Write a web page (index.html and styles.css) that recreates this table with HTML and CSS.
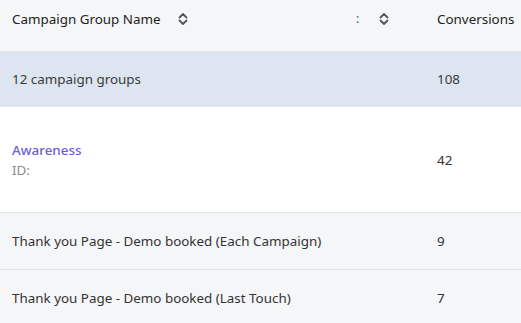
FILE: index.html
```html
<!DOCTYPE html>
<html>
<head>
<meta charset="utf-8">
<link rel="stylesheet" href="styles.css">
</head>
<body>
<div class="table">
  <div class="row head">
    <div class="c1"><span>Campaign Group Name</span>
      <svg class="sort" width="12" height="16" viewBox="0 0 12 16"><path d="M2.5 6.5 L6 3 L9.5 6.5 M2.5 9.5 L6 13 L9.5 9.5" fill="none" stroke="#555" stroke-width="1.8" stroke-linecap="round" stroke-linejoin="round"/></svg>
    </div>
    <div class="c2"><span class="colon">:</span>
      <svg class="sort" width="12" height="16" viewBox="0 0 12 16"><path d="M2.5 6.5 L6 3 L9.5 6.5 M2.5 9.5 L6 13 L9.5 9.5" fill="none" stroke="#555" stroke-width="1.8" stroke-linecap="round" stroke-linejoin="round"/></svg>
    </div>
    <div class="c3">Conversions</div>
  </div>
  <div class="row summary">
    <div class="c1">12 campaign groups</div>
    <div class="c2"></div>
    <div class="c3">108</div>
  </div>
  <div class="row tall">
    <div class="c1"><div class="link">Awareness</div><div class="id">ID:</div></div>
    <div class="c2"></div>
    <div class="c3">42</div>
  </div>
  <div class="row alt">
    <div class="c1">Thank you Page - Demo booked (Each Campaign)</div>
    <div class="c2"></div>
    <div class="c3">9</div>
  </div>
  <div class="row alt">
    <div class="c1">Thank you Page - Demo booked (Last Touch)</div>
    <div class="c2"></div>
    <div class="c3">7</div>
  </div>
</div>
</body>
</html>
```
FILE: styles.css
```css
html, body { margin: 0; padding: 0; background: #f5f6f8; }
body { font-family: "Noto Sans", "Open Sans", sans-serif; font-size: 13.4px; color: #333; }
.table { width: 521px; overflow: hidden; }
.row { display: grid; grid-template-columns: 345px 92px 84px; align-items: center; white-space: nowrap; }
.c1 { padding-left: 12px; display: flex; flex-direction: column; justify-content: center; }
.head { height: 51px; background: #f5f6f8; color: #222; align-items: start; }
.head > div { height: 20px; padding-top: 9px; line-height: 20px; }
.head .c1 { flex-direction: row; align-items: center; justify-content: flex-start; }
.head .c1 .sort { margin-left: 16px; }
.head .c2 { display: flex; align-items: center; padding-left: 11px; }
.colon { color: #2b5a7a; font-size: 12px; margin-right: 19px; }
.summary { height: 56px; background: #dde6f0; color: #3a3a3a; }
.tall { height: 105px; background: #fff; border-bottom: 1px solid #e3e3e3; }
.link { color: #6b5fd3; line-height: 20px; font-weight: 500; }
.id { color: #8a8a8a; line-height: 20px; }
.alt { height: 56px; background: #f5f6f8; border-bottom: 1px solid #e3e3e3; }
.sort { display: block; }
```
